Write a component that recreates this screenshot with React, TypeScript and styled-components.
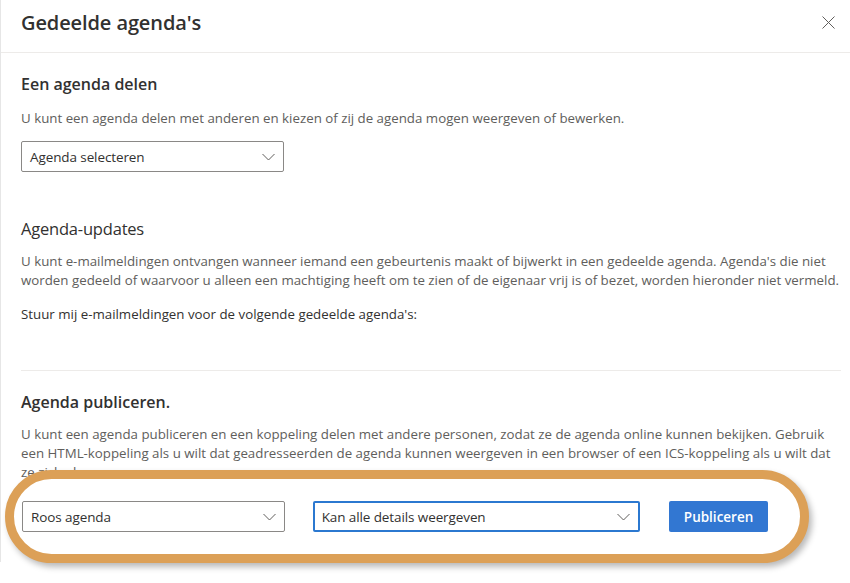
import styled, { createGlobalStyle } from 'styled-components';

// Gedeelde agenda's – instellingenpaneel
const GlobalStyle = createGlobalStyle`
  html, body {
    margin: 0;
    padding: 0;
    background: #ffffff;
  }
  body {
    font-family: "Open Sans", "Noto Sans", "Liberation Sans", sans-serif;
    color: #323130;
    -webkit-font-smoothing: antialiased;
  }
`

const Page = styled.div`
  width: 850px;
  height: 583px;
  overflow: hidden;
  background: #ffffff;
`

const Panel = styled.div`
  width: 850px;
  height: 562px;
  box-sizing: border-box;
  border-left: 1px solid #e6e6e6;
  background: #ffffff;
`

const Header = styled.header`
  display: flex;
  justify-content: space-between;
  align-items: flex-start;
  height: 53px;
  padding: 9px 12px 0 20px;
  box-sizing: border-box;
  border-bottom: 1px solid #edebe9;
`

const Title = styled.h1`
  margin: 0;
  font-size: 20px;
  line-height: 28px;
  font-weight: 600;
  color: #323130;
  letter-spacing: -0.1px;
`

const CloseButton = styled.button`
  display: flex;
  align-items: center;
  justify-content: center;
  width: 20px;
  height: 20px;
  margin-top: 3px;
  padding: 0;
  border: none;
  background: transparent;
  cursor: pointer;
`

const Body = styled.div`
  display: flex;
  flex-direction: column;
  padding: 0 9px 0 20px;
`

const Heading = styled.h2<{ $light?: boolean; $top: number }>`
  margin: ${({ $top }) => $top}px 0 0;
  font-size: ${({ $light }) => ($light ? '16.5px' : '16px')};
  line-height: ${({ $light }) => ($light ? '24px' : '22px')};
  font-weight: ${({ $light }) => ($light ? 400 : 600)};
  letter-spacing: ${({ $light }) => ($light ? '-0.2px' : '0')};
  color: #323130;
`

const Text = styled.p<{ $top: number; $dark?: boolean }>`
  margin: ${({ $top }) => $top}px 0 0;
  font-size: 13.3px;
  line-height: 19px;
  color: ${({ $dark }) => ($dark ? '#323130' : '#605e5c')};
`

const Divider = styled.hr<{ $top: number }>`
  margin: ${({ $top }) => $top}px 0 0;
  border: none;
  border-top: 1px solid #edebe9;
`

const Select = styled.div<{ $width: number; $focused?: boolean; $top?: number }>`
  display: flex;
  align-items: center;
  justify-content: space-between;
  width: ${({ $width }) => $width}px;
  height: 31px;
  margin-top: ${({ $top }) => $top ?? 0}px;
  box-sizing: border-box;
  padding: 0 8px 0 ${({ $focused }) => ($focused ? '7px' : '8px')};
  border: ${({ $focused }) => ($focused ? '2px solid #2b78d0' : '1px solid #8a8886')};
  border-radius: 2px;
  background: #ffffff;
  font-size: 13.5px;
  color: #323130;
  letter-spacing: -0.1px;
  cursor: pointer;
`

// oranje markering rond de publicatie-instellingen
const Highlight = styled.div`
  display: flex;
  align-items: center;
  gap: 28px;
  margin: -12px 32px 0 -16px;
  padding: 22px 32px 22px 8px;
  border: 9px solid #dca057;
  border-radius: 50px;
  background: #ffffff;
  box-shadow: 3px 4px 6px rgba(0, 0, 0, 0.28);
`

const PrimaryButton = styled.button`
  width: 99px;
  height: 31px;
  margin-left: 1px;
  border: none;
  border-radius: 2px;
  background: #3277d2;
  color: #ffffff;
  font-family: inherit;
  font-size: 13.5px;
  font-weight: 600;
  cursor: pointer;
`

const Chevron = () => (
  <svg width="13" height="8" viewBox="0 0 13 8">
    <polyline points="0.5,1 6.5,7 12.5,1" fill="none" stroke="#605e5c" strokeWidth="1" />
  </svg>
)

const CloseIcon = () => (
  <svg width="13" height="13" viewBox="0 0 13 13">
    <path d="M0.5 0.5 L12.5 12.5 M12.5 0.5 L0.5 12.5" stroke="#605e5c" strokeWidth="1" />
  </svg>
)

const App = () => {
  return (
    <Page>
      <GlobalStyle />
      <Panel>
        <Header>
          <Title>Gedeelde agenda's</Title>
          <CloseButton aria-label="Sluiten"><CloseIcon /></CloseButton>
        </Header>
        <Body>
          <Heading $top={20}>Een agenda delen</Heading>
          <Text $top={14}>U kunt een agenda delen met anderen en kiezen of zij de agenda mogen weergeven of bewerken.</Text>
          <Select $width={263} $top={13}>
            Agenda selecteren
            <Chevron />
          </Select>

          <Heading $light $top={45}>Agenda-updates</Heading>
          <Text $top={11}>
            U kunt e-mailmeldingen ontvangen wanneer iemand een gebeurtenis maakt of bijwerkt in een gedeelde agenda. Agenda's die niet worden gedeeld of waarvoor u alleen een machtiging heeft om te zien of de eigenaar vrij is of bezet, worden hieronder niet vermeld.
          </Text>
          <Text $top={15} $dark>Stuur mij e-mailmeldingen voor de volgende gedeelde agenda's:</Text>

          <Divider $top={46} />

          <Heading $top={20}>Agenda publiceren.</Heading>
          <Text $top={12}>
            U kunt een agenda publiceren en een koppeling delen met andere personen, zodat ze de agenda online kunnen bekijken. Gebruik een HTML-koppeling als u wilt dat geadresseerden de agenda kunnen weergeven in een browser of een ICS-koppeling als u wilt dat ze zich abonneren.
          </Text>
          <Highlight>
            <Select $width={263}>
              Roos agenda
              <Chevron />
            </Select>
            <Select $width={328} $focused>
              Kan alle details weergeven
              <Chevron />
            </Select>
            <PrimaryButton>Publiceren</PrimaryButton>
          </Highlight>
        </Body>
      </Panel>
    </Page>
  );
}

export default App;
